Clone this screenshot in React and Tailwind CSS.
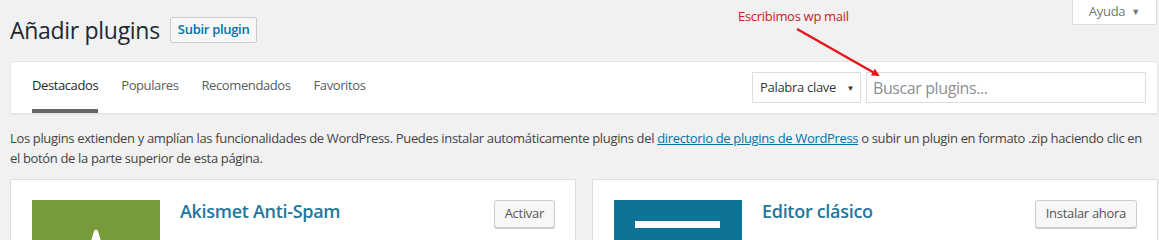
import React from 'react';

const font = { fontFamily: '"Open Sans", "Noto Sans", sans-serif' };

const tabs = ['Destacados', 'Populares', 'Recomendados', 'Favoritos'];

const PluginCard = ({ name, action, icon }) => (
    <div className="flex-1 bg-white border border-[#dddddd] h-[80px] flex items-start pt-[20px] pl-[21px] pr-[20px] overflow-hidden">
        {icon}
        <h3 className="ml-[20px] text-[18px] font-semibold text-[#23769c] leading-[22px] tracking-[-0.3px]">{name}</h3>
        <button className="ml-auto h-[28px] px-[10px] text-[13px] text-[#555] bg-[#f7f7f7] border border-[#cccccc] rounded-[3px] shadow-[0_1px_0_#ccc] tracking-[-0.3px]">
            {action}
        </button>
    </div>
);

const App = () => {
    return (
        <div className="bg-[#f1f1f1] w-[1159px] h-[240px] overflow-hidden relative text-[#444]" style={font}>
            {/* Help tab */}
            <div className="absolute top-0 right-[2px] w-[85px] h-[25px] bg-white border border-[#dddddd] border-t-0 flex items-center justify-center gap-[6px] text-[13px] text-[#72777c]">
                <span className="tracking-[-0.3px]">Ayuda</span>
                <span className="text-[9px]">▼</span>
            </div>

            {/* Annotation */}
            <div className="absolute left-[738px] top-[7px] text-[13px] text-[#c8202c] tracking-[-0.3px]">Escribimos wp mail</div>
            <svg className="absolute left-0 top-0 pointer-events-none z-10" width="1159" height="240">
                <defs>
                    <marker id="arr" markerWidth="8" markerHeight="8" refX="6" refY="4" orient="auto" markerUnits="userSpaceOnUse">
                        <path d="M0,0 L8,4 L0,8 Z" fill="#e3171d" />
                    </marker>
                </defs>
                <line x1="797" y1="29" x2="878" y2="75" stroke="#e3171d" strokeWidth="2.5" markerEnd="url(#arr)" />
            </svg>

            {/* Header */}
            <div className="flex items-center pt-[17px] pl-[10px]">
                <h1 className="text-[23px] text-[#23282d] leading-[26px] tracking-[-0.3px]">Añadir plugins</h1>
                <button className="ml-[10px] h-[26px] px-[7px] text-[13px] font-semibold text-[#0073aa] bg-[#f7f7f7] border border-[#cccccc] rounded-[2px] tracking-[-0.3px]">
                    Subir plugin
                </button>
            </div>

            {/* Filter bar */}
            <div className="mt-[18px] ml-[10px] mr-[1px] h-[53px] bg-white border border-[#e5e5e5] shadow-[0_1px_1px_rgba(0,0,0,0.04)] flex items-stretch pl-[21px] pr-[11px]">
                <div className="flex gap-[23px] text-[13px] tracking-[-0.4px]">
                    {tabs.map((t, i) => (
                        <div
                            key={t}
                            className={`flex items-center pt-[1px] border-b-4 ${i === 0 ? 'border-[#666666] text-[#23282d]' : 'border-transparent text-[#555d66]'}`}
                        >
                            {t}
                        </div>
                    ))}
                </div>
                <div className="ml-auto flex items-center gap-[5px]">
                    <div className="h-[31px] w-[109px] border border-[#dddddd] flex items-center pl-[7px] pr-[6px] text-[13px] text-[#32373c] tracking-[-0.3px]">
                        <span>Palabra clave</span>
                        <span className="ml-auto text-[8px]">▼</span>
                    </div>
                    <div className="h-[31px] w-[280px] border border-[#dddddd] flex items-center pl-[6px] text-[16px] text-[#8c8f94] tracking-[-0.4px]">
                        Buscar plugins...
                    </div>
                </div>
            </div>

            {/* Description */}
            <p className="mt-[14px] mx-[10px] text-[13px] leading-[20px] text-[#444] tracking-[-0.34px]">
                Los plugins extienden y amplían las funcionalidades de WordPress. Puedes instalar automáticamente plugins del{' '}
                <a className="text-[#0073aa] underline">directorio de plugins de WordPress</a> o subir un plugin en formato .zip haciendo clic en el botón de la parte superior de esta página.
            </p>

            {/* Cards */}
            <div className="flex gap-[16px] mt-[11px] ml-[10px] mr-[1px]">
                <PluginCard
                    name="Akismet Anti-Spam"
                    action="Activar"
                    icon={
                        <div className="w-[128px] h-[128px] bg-[#779a3a] shrink-0 relative">
                            <svg className="absolute left-[50px] top-[28px]" width="28" height="30" viewBox="0 0 28 30">
                                <path d="M12 3 Q14 0 16 3 L24 30 L4 30 Z" fill="#fff" />
                            </svg>
                        </div>
                    }
                />
                <PluginCard
                    name="Editor clásico"
                    action="Instalar ahora"
                    icon={
                        <div className="w-[128px] h-[128px] bg-[#0e7497] shrink-0 pt-[21px] pl-[21px]">
                            <div className="w-[85px] h-[7px] bg-white" />
                        </div>
                    }
                />
            </div>
        </div>
    );
};

export default App;
